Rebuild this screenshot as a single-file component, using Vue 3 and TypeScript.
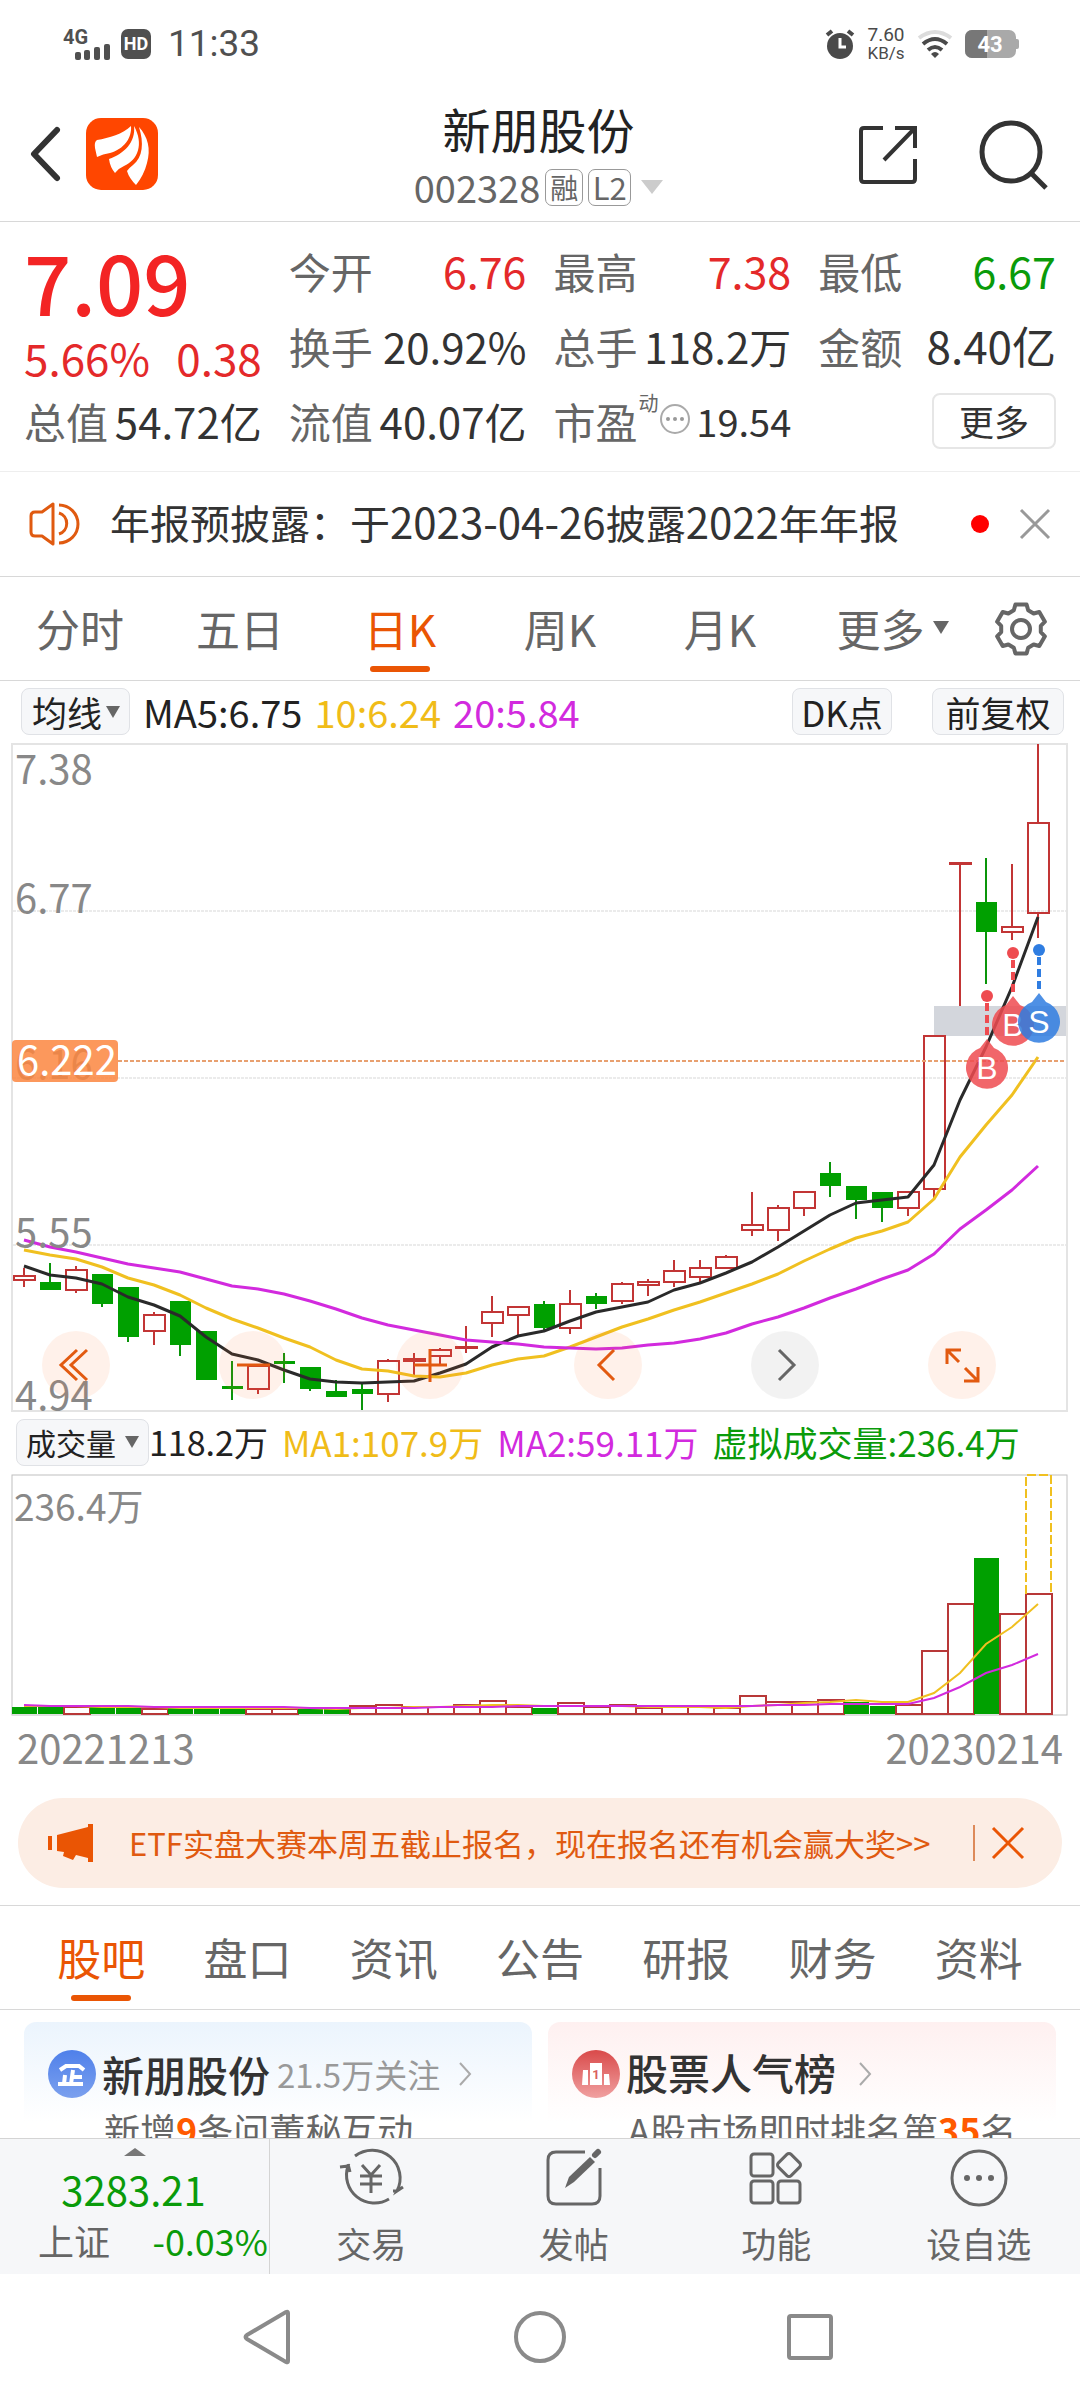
<script setup lang="ts">
type Candle = [bodyTop: number, bodyBottom: number, wickTop: number, wickBottom: number, tone: 'r' | 'g']

const STEP = 26
const cx = (i: number): number => 24 + STEP * i

const candles: Candle[] = [
  [1276, 1280, 1268, 1287, 'r'], [1282, 1290, 1263, 1290, 'g'], [1270, 1290, 1266, 1293, 'r'],
  [1274, 1304, 1274, 1307, 'g'], [1287, 1337, 1287, 1342, 'g'], [1315, 1331, 1312, 1345, 'r'],
  [1301, 1345, 1301, 1356, 'g'], [1331, 1380, 1331, 1380, 'g'], [1386, 1389, 1361, 1400, 'g'],
  [1366, 1389, 1366, 1394, 'r'], [1361, 1364, 1353, 1383, 'g'], [1367, 1389, 1367, 1391, 'g'],
  [1391, 1397, 1380, 1397, 'g'], [1389, 1394, 1383, 1410, 'g'], [1361, 1394, 1359, 1402, 'r'],
  [1359, 1361, 1353, 1375, 'r'], [1350, 1356, 1348, 1365, 'r'], [1347, 1348, 1326, 1353, 'r'],
  [1312, 1323, 1296, 1337, 'r'], [1307, 1315, 1307, 1336, 'r'], [1304, 1328, 1301, 1330, 'g'],
  [1304, 1328, 1290, 1334, 'r'], [1296, 1304, 1293, 1309, 'g'], [1284, 1301, 1282, 1304, 'r'],
  [1282, 1285, 1279, 1296, 'r'], [1271, 1282, 1260, 1287, 'r'], [1268, 1277, 1260, 1282, 'r'],
  [1257, 1268, 1255, 1268, 'r'], [1225, 1230, 1192, 1236, 'r'], [1208, 1230, 1205, 1241, 'r'],
  [1192, 1208, 1192, 1216, 'r'], [1173, 1186, 1162, 1197, 'g'], [1186, 1200, 1186, 1219, 'g'],
  [1192, 1208, 1192, 1222, 'g'], [1192, 1208, 1192, 1216, 'r'], [1036, 1189, 1036, 1199, 'r'],
  [863, 864, 864, 1006, 'r'], [902, 932, 858, 984, 'g'], [927, 932, 864, 940, 'r'],
  [823, 913, 744, 938, 'r'],
]

const ma5 = [1266, 1275, 1278, 1284, 1297, 1305, 1316, 1337, 1354, 1360, 1370, 1379, 1382, 1383, 1382, 1381, 1373, 1364, 1347, 1336, 1331, 1321, 1312, 1307, 1302, 1290, 1283, 1273, 1262, 1247, 1231, 1215, 1203, 1200, 1197, 1165, 1100, 1047, 987, 917]
const ma10 = [1250, 1255, 1259, 1267, 1278, 1285, 1295, 1308, 1319, 1328, 1338, 1347, 1360, 1369, 1371, 1376, 1377, 1373, 1365, 1359, 1356, 1347, 1337, 1327, 1319, 1310, 1302, 1293, 1284, 1274, 1261, 1249, 1238, 1231, 1222, 1199, 1157, 1125, 1095, 1057]
const ma20 = [1240, 1247, 1252, 1258, 1264, 1268, 1272, 1279, 1286, 1289, 1294, 1301, 1309, 1318, 1325, 1330, 1335, 1340, 1342, 1344, 1347, 1348, 1349, 1348, 1345, 1343, 1339, 1333, 1324, 1317, 1308, 1298, 1289, 1279, 1270, 1254, 1229, 1210, 1190, 1166]

const volTops = [1707, 1707, 1707, 1707, 1707, 1709, 1708, 1708, 1708, 1709, 1709, 1709, 1709, 1706, 1705, 1707, 1707, 1705, 1701, 1707, 1708, 1703, 1707, 1705, 1708, 1707, 1707, 1708, 1696, 1702, 1702, 1700, 1702, 1706, 1705, 1651, 1604, 1558, 1614, 1594]
const volGreen = new Set([0, 1, 3, 4, 6, 7, 8, 11, 12, 20, 32, 33, 37])
const volMa1 = [1706, 1706, 1706, 1707, 1707, 1707, 1708, 1708, 1708, 1708, 1708, 1708, 1709, 1708, 1708, 1707, 1707, 1706, 1705, 1705, 1706, 1706, 1706, 1706, 1707, 1707, 1707, 1708, 1706, 1705, 1703, 1702, 1700, 1702, 1702, 1693, 1673, 1644, 1627, 1604]
const volMa2 = [1705, 1706, 1706, 1706, 1706, 1707, 1707, 1707, 1707, 1707, 1707, 1708, 1708, 1708, 1708, 1708, 1707, 1707, 1707, 1706, 1706, 1706, 1706, 1706, 1706, 1706, 1706, 1706, 1706, 1705, 1705, 1704, 1704, 1704, 1704, 1698, 1687, 1673, 1665, 1654]

const line = (ys: number[]): string => ys.map((y, i) => `${cx(i)},${y}`).join(' ')

const grid = [911, 1078, 1245]
const axis = [
  { t: '7.38', y: 784 }, { t: '6.77', y: 913 }, { t: '6.16', y: 1079 },
  { t: '5.55', y: 1247 }, { t: '4.94', y: 1410 },
]
const pins = [
  { x: 987, y: 996, t: 'B', tone: 'buy' },
  { x: 1013, y: 953, t: 'B', tone: 'buy' },
  { x: 1039, y: 950, t: 'S', tone: 'sell' },
]

const periods = ['分时', '五日', '日K', '周K', '月K']
const sections = ['股吧', '盘口', '资讯', '公告', '研报', '财务', '资料']

// six-tooth gear outline
const gear = ((): string => {
  const pts: string[] = []
  for (let k = 0; k < 6; k++) {
    for (const [d, r] of [[-21, 20], [-13, 25], [13, 25], [21, 20]]) {
      const a = ((k * 60 - 90 + d) * Math.PI) / 180
      pts.push(`${(28 + r * Math.cos(a)).toFixed(1)},${(28 + r * Math.sin(a)).toFixed(1)}`)
    }
  }
  return pts.join(' ')
})()
</script>

<template>
  <div class="app">
    <div class="status">
      <div class="st-left">
        <svg width="48" height="34" viewBox="0 0 48 34">
          <text x="0" y="17" class="g4">4G</text>
          <g fill="#505050"><rect x="12" y="25" width="6" height="8" rx="2" /><rect x="21" y="23" width="6" height="10" rx="2" /><rect x="31" y="20" width="6" height="13" rx="2" /><rect x="41" y="17" width="6" height="16" rx="2" /></g>
        </svg>
        <span class="hd">HD</span>
        <span class="clock">11:33</span>
      </div>
      <div class="st-right">
        <svg width="30" height="30" viewBox="0 0 30 30">
          <circle cx="15" cy="17" r="13" fill="#4a4a4a" />
          <path d="M2 6 7 2M28 6 23 2" stroke="#4a4a4a" stroke-width="4" />
          <path d="M15 9v9h6" fill="none" stroke="#fff" stroke-width="3" />
        </svg>
        <span class="speed"><b>7.60</b><i>KB/s</i></span>
        <svg width="36" height="30" viewBox="0 0 36 30" fill="none" stroke="#4a4a4a" stroke-width="4">
          <path d="M2 9Q18-3 34 9" stroke="#dcdcdc" />
          <path d="M6 15Q18 5 30 15" />
          <path d="M11 21Q18 15 25 21" />
          <path d="M14 25Q18 21 22 25L18 29Z" fill="#4a4a4a" stroke="none" />
        </svg>
        <svg width="54" height="28" viewBox="0 0 54 28">
          <rect width="51" height="28" rx="7" fill="#a9a9a9" /><rect x="49" y="9" width="5" height="10" rx="2" fill="#a9a9a9" />
          <path d="M7 0H22V28H7A7 7 0 0 1 0 21V7A7 7 0 0 1 7 0Z" fill="#777" />
          <text x="25" y="22" text-anchor="middle" class="bat">43</text>
        </svg>
      </div>
    </div>

    <header class="head">
      <div class="h-left">
        <button aria-label="返回"><svg width="34" height="58" viewBox="0 0 34 58"><path d="M29 5 6 29 29 53" fill="none" stroke="#333" stroke-width="6" stroke-linecap="round" stroke-linejoin="round" /></svg></button>
        <svg width="72" height="72" viewBox="0 0 72 72">
          <rect width="72" height="72" rx="15" fill="#ff4600" />
          <g fill="#fff">
            <path d="M45 8C37 16 23 20 11 22Q8 24 9 30L11 39Q17 36 24 35C38 31 46 20 45 8Z" />
            <path d="M48 8C50 24 38 36 23 41Q24 49 29 55Q33 50 38 48C52 42 58 26 48 8Z" />
            <path d="M53 9C62 19 65 31 61 45Q58 57 50 67Q43 60 41 53Q43 50 47 47C57 39 58 25 53 9Z" />
          </g>
        </svg>
      </div>
      <div class="h-mid">
        <h1>新朋股份</h1>
        <div class="code">
          <span>002328</span><span class="tag">融</span><span class="tag l2">L2</span>
          <svg width="22" height="14" viewBox="0 0 22 14"><path d="M0 0H22L11 14Z" fill="#ccc" /></svg>
        </div>
      </div>
      <div class="h-right">
        <button aria-label="分享"><svg width="58" height="58" viewBox="0 0 58 58" fill="none" stroke="#333" stroke-width="4"><path d="M24 2H5Q2 2 2 5V53Q2 56 5 56H53Q56 56 56 53V33M36 2H56V22M56 2 25 34" /></svg></button>
        <button aria-label="搜索"><svg width="70" height="70" viewBox="0 0 70 70" fill="none" stroke="#333" stroke-width="5"><circle cx="32" cy="32" r="29" /><path d="M52 53 67 68" /></svg></button>
      </div>
    </header>

    <main>
      <section class="quote">
        <div class="col">
          <div class="price">7.09</div>
          <div class="chg"><span>5.66%</span><span>0.38</span></div>
          <div class="cell last"><span class="lab">总值</span><span>54.72亿</span></div>
        </div>
        <div class="col">
          <div class="cell"><span class="lab">今开</span><span class="up">6.76</span></div>
          <div class="cell"><span class="lab">换手</span><span>20.92%</span></div>
          <div class="cell"><span class="lab">流值</span><span>40.07亿</span></div>
        </div>
        <div class="col">
          <div class="cell"><span class="lab">最高</span><span class="up">7.38</span></div>
          <div class="cell"><span class="lab">总手</span><span>118.2万</span></div>
          <div class="cell pe">
            <span class="lab">市盈</span><small>动</small>
            <svg width="30" height="30" viewBox="0 0 30 30"><circle cx="15" cy="15" r="14" fill="none" stroke="#aaa" stroke-width="2" /><g fill="#999"><circle cx="8" cy="15" r="2" /><circle cx="15" cy="15" r="2" /><circle cx="22" cy="15" r="2" /></g></svg>
            <b>19.54</b>
          </div>
        </div>
        <div class="col">
          <div class="cell"><span class="lab">最低</span><span class="down">6.67</span></div>
          <div class="cell"><span class="lab">金额</span><span class="amt">8.40亿</span></div>
          <div class="cell end"><button class="more">更多</button></div>
        </div>
      </section>

      <section class="notice">
        <svg width="52" height="46" viewBox="0 0 52 46" fill="none" stroke="#e05a10" stroke-width="3"><path d="M24 3V43L13 35H6Q2 35 2 31V15Q2 11 6 11H13Z" stroke-linejoin="round" /><path d="M30 12A11 11 0 0 1 30 33M30 4A19 19 0 0 1 30 42" /></svg>
        <p>年报预披露：于<span>2023-04-26</span>披露<span>2022</span>年年报</p>
        <i class="dot"></i>
        <button aria-label="关闭"><svg width="30" height="30" viewBox="0 0 30 30"><path d="M1 1 29 29M29 1 1 29" stroke="#999" stroke-width="3" /></svg></button>
      </section>

      <nav class="tabs">
        <button v-for="p in periods" :key="p" :class="{ on: p === '日K' }">{{ p }}</button>
        <button class="wide">更多<svg width="16" height="13" viewBox="0 0 16 13"><path d="M0 0H16L8 13Z" fill="#666" /></svg></button>
        <button class="gear" aria-label="设置"><svg width="56" height="56" viewBox="0 0 56 56" fill="none" stroke="#666" stroke-width="4" stroke-linejoin="round"><polygon :points="gear" /><circle cx="28" cy="28" r="9" /></svg></button>
      </nav>

      <div class="ma-row">
        <span class="pick"><select aria-label="均线"><option>均线</option></select><svg width="14" height="12" viewBox="0 0 14 12"><path d="M0 0H14L7 12Z" fill="#666" /></svg></span>
        <span class="k">MA5:6.75</span><span class="y">10:6.24</span><span class="p">20:5.84</span>
        <button class="chip dk">DK点</button><button class="chip">前复权</button>
      </div>

      <div class="kline">
        <svg class="plot" viewBox="0 742 1080 670">
          <rect x="12" y="744" width="1055" height="667" fill="none" stroke="#e4e4e4" stroke-width="2" />
          <line v-for="g in grid" :key="g" x1="13" x2="1066" :y1="g" :y2="g" stroke="#ebebeb" stroke-width="2" stroke-dasharray="3 1" />
          <rect x="934" y="1006" width="132" height="30" fill="#d3d6dc" />
          <g v-for="(c, i) in candles" :key="i" :class="c[4]">
            <line :x1="cx(i)" :x2="cx(i)" :y1="c[2]" :y2="c[0]" />
            <line :x1="cx(i)" :x2="cx(i)" :y1="c[1]" :y2="c[3]" />
            <rect :x="cx(i) - 10" :y="c[0]" width="21" :height="c[1] - c[0]" />
          </g>
          <g fill="none" stroke-width="3" stroke-linejoin="round">
            <polyline :points="line(ma5)" stroke="#2a2a2a" />
            <polyline :points="line(ma10)" stroke="#f0c020" />
            <polyline :points="line(ma20)" stroke="#d22ade" />
          </g>
          <text v-for="a in axis" :key="a.t" x="15" :y="a.y" class="ax">{{ a.t }}</text>
          <line x1="118" x2="1066" y1="1061" y2="1061" stroke="#e8a070" stroke-width="2" stroke-dasharray="4 2" />
          <rect x="12" y="1040" width="106" height="42" rx="4" fill="#fb8640" fill-opacity=".85" />
          <text x="17" y="1075" class="ax cur">6.222</text>
          <g v-for="(n, i) in pins" :key="'p' + i" :class="n.tone">
            <circle :cx="n.x" :cy="n.y" r="6" />
            <line :x1="n.x" :x2="n.x" :y1="n.y + 7" :y2="n.y + 43" stroke-width="4" stroke-dasharray="8 4" />
            <path :d="`M${n.x} ${n.y + 43}l7 9a21 21 0 1 1-14 0Z`" fill-opacity=".85" />
            <text :x="n.x" :y="n.y + 83" text-anchor="middle">{{ n.t }}</text>
          </g>
        </svg>
        <div class="ctl">
          <button aria-label="最早"><svg viewBox="0 0 68 68"><path d="M35 19 19 34 35 49M45 19 29 34 45 49" /></svg></button>
          <button aria-label="缩小"><svg viewBox="0 0 68 68"><path d="M18 34H51" /></svg></button>
          <button aria-label="放大"><svg viewBox="0 0 68 68"><path d="M18 34H51M34 18V51" /></svg></button>
          <button aria-label="前移"><svg viewBox="0 0 68 68"><path d="M40 19 25 34 40 49" /></svg></button>
          <button class="off" aria-label="后移"><svg viewBox="0 0 68 68"><path d="M28 19 43 34 28 49" /></svg></button>
          <button aria-label="全屏"><svg viewBox="0 0 68 68"><path d="M19 33V19H33M20 20 31 31M36 50H50V36M49 49 37 37" /></svg></button>
        </div>
      </div>

      <div class="vol-row">
        <span class="pick v"><select aria-label="成交量"><option>成交量</option></select><svg width="14" height="12" viewBox="0 0 14 12"><path d="M0 0H14L7 12Z" fill="#666" /></svg></span>
        <span class="k">118.2万</span><span class="y">MA1:107.9万</span><span class="p">MA2:59.11万</span><span class="g2">虚拟成交量:236.4万</span>
      </div>

      <svg class="plot" viewBox="0 1472 1080 246">
        <rect x="12" y="1475" width="1055" height="240" fill="none" stroke="#c0c0c0" stroke-width="1" />
        <text x="14" y="1521" class="vx">236.4万</text>
        <g v-for="(t, i) in volTops" :key="i">
          <rect v-if="volGreen.has(i)" :x="cx(i) - 12" :y="t" width="25" :height="1714 - t" fill="#00a000" />
          <rect v-else :x="cx(i) - 12" :y="t" width="26" :height="1714 - t" fill="#fff" stroke="#b83838" stroke-width="2" />
        </g>
        <path d="M1026 1594V1475H1051V1594" fill="none" stroke="#f0c020" stroke-width="2" stroke-dasharray="9 3" />
        <polyline :points="line(volMa1)" fill="none" stroke="#f0c020" stroke-width="2" />
        <polyline :points="line(volMa2)" fill="none" stroke="#d22ade" stroke-width="2" />
      </svg>
      <div class="dates"><span>20221213</span><span>20230214</span></div>

      <div class="ad">
        <svg width="46" height="40" viewBox="0 0 46 40" fill="#ea5504"><rect x="0" y="13" width="4" height="14" /><path d="M9 12 40 4V1H45V39H40V35L28 32 25 37 15 33 16 29 9 28Z" /></svg>
        <a href="#">ETF实盘大赛本周五截止报名，现在报名还有机会赢大奖&gt;&gt;</a>
        <i></i>
        <button aria-label="关闭广告"><svg width="34" height="34" viewBox="0 0 34 34"><path d="M2 2 32 32M32 2 2 32" stroke="#ea5504" stroke-width="3" /></svg></button>
      </div>

      <nav class="tabs sec">
        <button v-for="s in sections" :key="s" :class="{ on: s === '股吧' }">{{ s }}</button>
      </nav>

      <div class="cards">
        <article class="blue">
          <div class="c-head">
            <svg width="48" height="48" viewBox="0 0 48 48">
              <defs><linearGradient id="gb" x2="0" y2="1"><stop stop-color="#4f80ea" /><stop offset="1" stop-color="#7ba0ee" /></linearGradient></defs>
              <circle cx="24" cy="24" r="24" fill="url(#gb)" />
              <path d="M12 20 18 16H31L36 20M25 20 23 34M17 25 16 34M25 27H34M10 34H35" fill="none" stroke="#fff" stroke-width="4" />
            </svg>
            <h2>新朋股份</h2><span>21.5万关注</span>
            <svg class="arr" width="14" height="24" viewBox="0 0 14 24"><path d="M2 1 12 12 2 23" fill="none" stroke="#aaa" stroke-width="2" /></svg>
          </div>
          <p>新增<b>9</b>条问董秘互动</p>
        </article>
        <article class="red">
          <div class="c-head">
            <svg width="48" height="48" viewBox="0 0 48 48">
              <defs><linearGradient id="gr" x2="0" y2="1"><stop stop-color="#d94a4a" /><stop offset="1" stop-color="#f0a0a0" /></linearGradient></defs>
              <circle cx="24" cy="24" r="24" fill="url(#gr)" />
              <path d="M18 13H30V35H18ZM11 20H16V35H10ZM32 24H37L38 35H32Z" fill="#fff" />
              <text x="24" y="29" text-anchor="middle" class="one">1</text>
            </svg>
            <h2>股票人气榜</h2>
            <svg class="arr wide" width="14" height="24" viewBox="0 0 14 24"><path d="M2 1 12 12 2 23" fill="none" stroke="#aaa" stroke-width="2" /></svg>
          </div>
          <p>A股市场即时排名第<b>35</b>名</p>
        </article>
      </div>
    </main>

    <footer class="bar">
      <div class="idx">
        <svg width="22" height="8" viewBox="0 0 22 8"><path d="M0 8 11 0 22 8Z" fill="#777" /></svg>
        <strong>3283.21</strong>
        <div><span>上证</span><em>-0.03%</em></div>
      </div>
      <button>
        <svg width="66" height="60" viewBox="0 0 66 60" fill="none" stroke="#666" stroke-width="3"><path d="M17 8A28 28 0 0 1 59 43L65 39M59 43 55 43M51 51A28 28 0 0 1 10 18L2 19M10 16 12 24" /><path d="M24 17 33 27 42 17M22 28H44M22 36H44M33 27V45" /></svg>
        交易
      </button>
      <button>
        <svg width="60" height="60" viewBox="0 0 60 60" fill="none" stroke="#666" stroke-width="3"><path d="M41 4H12Q4 4 4 12V48Q4 56 12 56H48Q56 56 56 48V20" /><path d="M21 40 25 29 46 9 51 14 30 34Z" fill="#666" stroke="none" /><path d="M51 7 54 4" stroke-width="6" stroke-linecap="round" /></svg>
        发帖
      </button>
      <button>
        <svg width="60" height="60" viewBox="0 0 60 60" fill="none" stroke="#666" stroke-width="3"><rect x="5" y="6" width="22" height="22" rx="3" /><rect x="5" y="33" width="22" height="22" rx="3" /><rect x="32" y="33" width="22" height="22" rx="3" /><rect x="34" y="8" width="18" height="18" rx="3" transform="rotate(45 43 17)" /></svg>
        功能
      </button>
      <button>
        <svg width="60" height="60" viewBox="0 0 60 60"><circle cx="30" cy="30" r="27" fill="none" stroke="#666" stroke-width="3" /><g fill="#666"><circle cx="18" cy="30" r="3" /><circle cx="30" cy="30" r="3" /><circle cx="42" cy="30" r="3" /></g></svg>
        设自选
      </button>
    </footer>

    <div class="sys">
      <button aria-label="后退"><svg width="60" height="60" viewBox="0 0 60 60"><path d="M48 6V54Q48 56 46 55L7 32Q4 30 7 28L46 5Q48 4 48 6Z" /></svg></button>
      <button aria-label="主页"><svg width="60" height="60" viewBox="0 0 60 60"><circle cx="30" cy="30" r="24" /></svg></button>
      <button aria-label="最近"><svg width="60" height="60" viewBox="0 0 60 60"><rect x="9" y="9" width="42" height="42" rx="2" /></svg></button>
    </div>
  </div>
</template>

<style>
body {
  margin: 0;
  background: #fff;
}
</style>

<style scoped>
.app {
  height: 100vh;
  display: flex;
  flex-direction: column;
  overflow: hidden;
  font-family: "Noto Sans CJK SC", "Noto Sans", sans-serif;
  color: #333;
  white-space: nowrap;
  background: #fff;
}
.app * { box-sizing: border-box; }
button, select {
  font: inherit;
  color: inherit;
  background: none;
  border: 0;
  padding: 0;
  margin: 0;
  appearance: none;
}
svg { display: block; flex: none; overflow: visible; }
h1, h2, p { margin: 0; }
i, em { font-style: normal; }

.status {
  flex: none;
  height: 88px;
  padding: 0 61px 0 63px;
  display: flex;
  justify-content: space-between;
  align-items: center;
}
.st-left, .st-right { display: flex; align-items: center; }
.g4 { font: 700 20px "Roboto", sans-serif; fill: #505050; }
.hd {
  width: 30px;
  height: 30px;
  margin: 0 17px 0 10px;
  border-radius: 7px;
  background: #505050;
  color: #fff;
  font: 700 18px/30px "Roboto", sans-serif;
  text-align: center;
}
.clock { font: 37px/44px "Roboto", sans-serif; color: #505050; }
.st-right { gap: 12px; }
.speed { display: flex; flex-direction: column; align-items: center; font-family: "Roboto", sans-serif; color: #4a4a4a; width: 38px; }
.speed b { font-size: 19px; line-height: 18px; font-weight: 400; }
.speed i { font-size: 17px; line-height: 18px; }
.bat { font: 700 22px "Roboto", sans-serif; fill: #fff; }

.head {
  flex: none;
  height: 134px;
  padding: 0 31px 0 28px;
  border-bottom: 1px solid #d8d8d8;
  display: grid;
  grid-template-columns: 1fr auto 1fr;
}
.h-left { display: flex; align-items: center; gap: 24px; padding-bottom: 1px; }
.h-mid { display: flex; flex-direction: column; align-items: center; padding-top: 8px; }
h1 { font-size: 48px; line-height: 64px; font-weight: 400; color: #222; }
.code { display: flex; align-items: center; font-size: 38px; line-height: 54px; color: #666; }
.tag {
  height: 37px;
  width: 38px;
  margin-left: 5px;
  border: 1px solid #999;
  border-radius: 7px;
  font-size: 28px;
  line-height: 34px;
  text-align: center;
}
.tag.l2 { width: 43px; font-size: 31px; }
.code svg { margin-left: 10px; }
.h-right { display: flex; justify-content: flex-end; align-items: center; gap: 62px; }

main { flex: 1; min-height: 0; overflow: hidden; }

.quote {
  display: grid;
  grid-template-columns: repeat(4, minmax(0, 1fr));
  gap: 27px;
  padding: 11px 24px 13px;
  border-bottom: 1px solid #eee;
}
.price { font-size: 83px; line-height: 94px; font-weight: 500; color: #f32424; }
.chg { display: flex; justify-content: space-between; font-size: 44px; line-height: 60px; color: #e4292a; }
.cell { display: flex; justify-content: space-between; align-items: center; height: 75px; font-size: 42px; line-height: 61px; }
.cell.last { height: 71px; padding-bottom: 4px; }
.cell.end { justify-content: flex-end; }
.lab { color: #666; }
.up { font-size: 43px; color: #e4292a; }
.down { font-size: 43px; color: #0a9b0a; }
.amt { font-size: 44px; }
small { margin-left: 1px; font-size: 20px; line-height: 29px; color: #666; align-self: flex-start; padding-top: 5px; }
.pe { justify-content: flex-start; }
.pe svg { margin-left: 1px; margin-bottom: 4px; }
.pe b { margin-left: auto; font-size: 38px; font-weight: 400; }
.more { width: 124px; height: 56px; border: 2px solid #e6e6e6; border-radius: 8px; font-size: 35px; line-height: 48px; }

.notice { height: 105px; padding: 0 30px 0 29px; display: flex; align-items: center; border-bottom: 1px solid #d8d8d8; }
.notice p { flex: 1; margin-left: 29px; font-size: 40px; line-height: 62px; padding-bottom: 6px; }
.notice p span { font-size: 42px; }
.dot { width: 18px; height: 18px; border-radius: 50%; background: #f00; margin-right: 31px; }

.tabs { height: 104px; padding-right: 23px; display: flex; border-bottom: 1px solid #d8d8d8; font-size: 44px; line-height: 64px; color: #666; }
.tabs button { position: relative; flex: 160 1 0; padding-bottom: 2px; }
.tabs .wide { flex-grow: 185; display: flex; align-items: center; justify-content: center; gap: 8px; }
.tabs .gear { flex-grow: 72; display: flex; align-items: center; justify-content: center; padding: 0; }
.tabs .on { color: #ea5504; }
.tabs .on::after {
  content: "";
  position: absolute;
  left: 50%;
  bottom: 8px;
  width: 60px;
  height: 6px;
  margin-left: -30px;
  border-radius: 3px;
  background: #ea5504;
}

.ma-row { height: 61px; padding: 0 16px 0 21px; display: flex; align-items: center; font-size: 38px; line-height: 56px; }
.pick { display: flex; align-items: center; height: 47px; width: 109px; padding: 0 9px 0 10px; justify-content: space-between; border: 1px solid #e0e2e6; border-radius: 8px; background: #f6f7f9; color: #222; font-size: 35px; }
.pick select { height: 52px; line-height: 52px; padding-bottom: 2px; margin: -4px 0; }
.chip { height: 47px; border: 1px solid #e0e2e6; border-radius: 8px; background: #f6f7f9; color: #222; width: 132px; font-size: 35px; line-height: 42px; }
.chip.dk { margin-left: auto; margin-right: 40px; width: 100px; }
.k { color: #222; }
.y, .p, .g2 { margin-left: 14px; }
.y { color: #f0bc18; }
.p { color: #d22ade; }
.g2 { color: #0a9b0a; }
.ma-row .k { margin-left: 13px; }
.ma-row .y, .ma-row .p { margin-left: 12px; }

.kline { position: relative; }
.plot { width: 100%; height: auto; }
.r line { stroke: #c23535; stroke-width: 2; }
.r rect { fill: none; stroke: #c23535; stroke-width: 2; }
.g line { stroke: #0a950a; stroke-width: 2; }
.g rect { fill: #00a000; }
.ax { font-size: 40px; fill: #888; }
.cur { fill: #fff; }
.vx { font-size: 37px; fill: #888; }
.buy { fill: #ee4b50; stroke: none; }
.buy line { stroke: #ee4b50; }
.sell { fill: #2f7de1; }
.sell line { stroke: #2f7de1; }
.buy text, .sell text { font: 32px "Liberation Sans", sans-serif; fill: #fff; }
.ctl { position: absolute; left: 0; right: 0; bottom: 13px; padding: 0 84px 0 42px; display: flex; justify-content: space-between; }
.ctl button { width: 68px; height: 68px; border-radius: 50%; background: rgba(255, 120, 50, 0.1); }
.ctl svg { width: 68px; height: 68px; fill: none; stroke: #e25a10; stroke-width: 3; }
.ctl .off { background: rgba(0, 0, 0, 0.05); }
.ctl .off svg { stroke: #666; }

.vol-row { height: 60px; padding: 0 16px; display: flex; align-items: center; font-size: 35px; line-height: 52px; }
.pick.v { width: 133px; padding: 0 9px; font-size: 30px; }
.vol-row .k { font-size: 34px; }

.dates { height: 62px; padding: 0 17px 4px; display: flex; justify-content: space-between; align-items: center; font-size: 40px; line-height: 60px; color: #888; }

.ad { height: 90px; margin: 18px 18px 17px; padding: 0 37px 0 30px; border-radius: 45px; background: #fcede4; display: flex; align-items: center; }
.ad a { flex: 1; margin-left: 35px; font-size: 31px; line-height: 46px; color: #e05a10; text-decoration: none; }
.ad i { width: 2px; height: 36px; background: #dd8a5a; margin-right: 16px; }
.sec { border-top: 1px solid #d8d8d8; height: 105px; padding: 0 28px; }

.cards { padding: 12px 24px 0; display: grid; grid-template-columns: 1fr 1fr; gap: 16px; }
article { height: 220px; border-radius: 12px; padding: 24px 24px 0; }
.blue { background: linear-gradient(#ebf4fd, #fff 100px); }
.red { background: linear-gradient(#fef0f0, #fff 100px); }
.c-head { display: flex; align-items: center; height: 56px; }
h2 { margin-left: 6px; font-size: 42px; line-height: 62px; font-weight: 500; }
.red h2 { padding-bottom: 4px; }
.c-head span { margin-left: 7px; font-size: 33px; color: #999; }
.arr { margin-left: 18px; }
.arr.wide { margin-left: 22px; }
article p { margin-left: 56px; font-size: 36px; line-height: 54px; color: #666; }
article b { color: #ff5a00; font-weight: 700; }
.one { font: 700 13px "Roboto", sans-serif; fill: #d96060; }

.bar { flex: none; height: 136px; display: flex; border-top: 1px solid #d4d4d4; background: #f6f7f9; color: #666; }
.idx { width: 25%; border-right: 1px solid #d4d4d4; display: flex; flex-direction: column; align-items: center; padding-top: 9px; }
.idx strong { font-weight: 400; font-size: 40px; line-height: 66px; color: #0a9b0a; margin-right: 2px; }
.idx div { align-self: stretch; display: flex; justify-content: space-between; padding: 0 1px 0 38px; font-size: 36px; line-height: 36px; }
.idx em { color: #0a9b0a; }
.bar button { flex: 1; display: flex; flex-direction: column; align-items: center; font-size: 35px; line-height: 52px; padding-top: 9px; gap: 9px; }

.sys { flex: none; height: 126px; padding: 0 135px; display: flex; align-items: center; }
.sys button { flex: 1; display: flex; justify-content: center; }
.sys svg { fill: none; stroke: #8a8a8a; stroke-width: 4; }
</style>
